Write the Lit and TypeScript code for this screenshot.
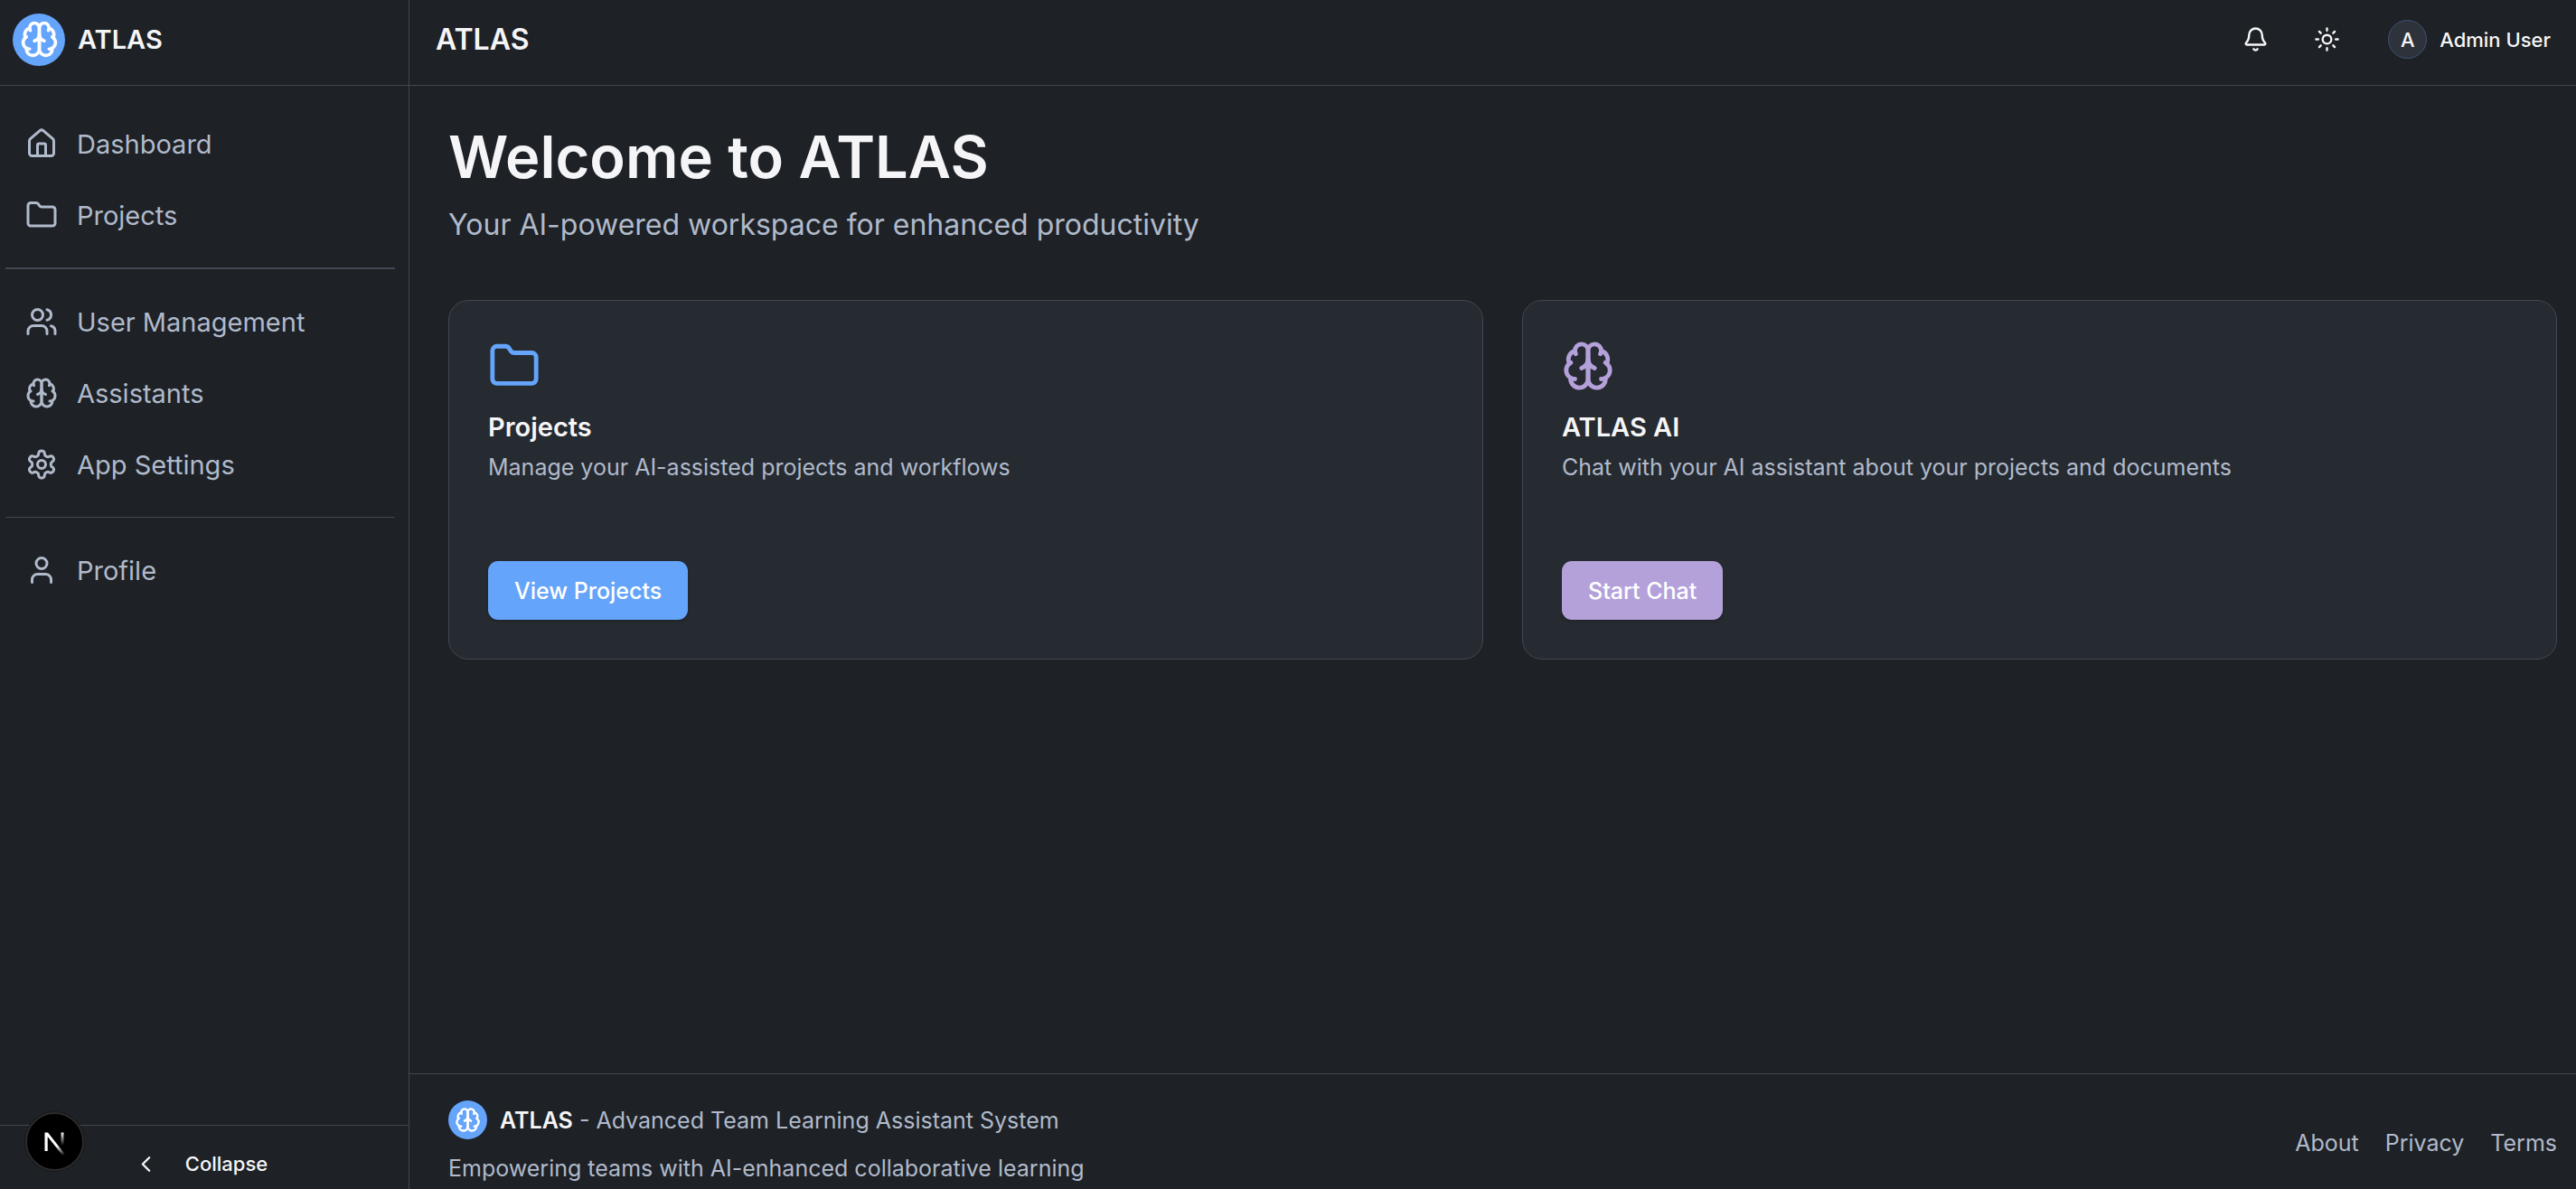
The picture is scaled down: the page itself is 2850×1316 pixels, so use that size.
import { LitElement, html, svg, css, type TemplateResult } from "lit";
import { customElement, property } from "lit/decorators.js";

const ICONS: Record<string, TemplateResult> = {
  brain: svg`
    <path d="M12 5a3 3 0 1 0-5.997.125 4 4 0 0 0-2.526 5.77 4 4 0 0 0 .556 6.588A4 4 0 1 0 12 18Z"/>
    <path d="M12 5a3 3 0 1 1 5.997.125 4 4 0 0 1 2.526 5.77 4 4 0 0 1-.556 6.588A4 4 0 1 1 12 18Z"/>
    <path d="M15 13a4.5 4.5 0 0 1-3-4 4.5 4.5 0 0 1-3 4"/>
    <path d="M17.599 6.5a3 3 0 0 0 .399-1.375"/>
    <path d="M6.003 5.125A3 3 0 0 0 6.401 6.5"/>
    <path d="M3.477 10.896a4 4 0 0 1 .585-.396"/>
    <path d="M19.938 10.5a4 4 0 0 1 .585.396"/>
    <path d="M6 18a4 4 0 0 1-1.967-.516"/>
    <path d="M19.967 17.484A4 4 0 0 1 18 18"/>`,
  home: svg`
    <path d="M15 21v-8a1 1 0 0 0-1-1h-4a1 1 0 0 0-1 1v8"/>
    <path d="M3 10a2 2 0 0 1 .709-1.528l7-5.999a2 2 0 0 1 2.582 0l7 5.999A2 2 0 0 1 21 10v9a2 2 0 0 1-2 2H5a2 2 0 0 1-2-2z"/>`,
  folder: svg`
    <path d="M20 20a2 2 0 0 0 2-2V8a2 2 0 0 0-2-2h-7.9a2 2 0 0 1-1.69-.9L9.6 3.9A2 2 0 0 0 7.93 3H4a2 2 0 0 0-2 2v13a2 2 0 0 0 2 2Z"/>`,
  users: svg`
    <path d="M16 21v-2a4 4 0 0 0-4-4H6a4 4 0 0 0-4 4v2"/>
    <circle cx="9" cy="7" r="4"/>
    <path d="M22 21v-2a4 4 0 0 0-3-3.87"/>
    <path d="M16 3.13a4 4 0 0 1 0 7.75"/>`,
  settings: svg`
    <path d="M12.22 2h-.44a2 2 0 0 0-2 2v.18a2 2 0 0 1-1 1.73l-.43.25a2 2 0 0 1-2 0l-.15-.08a2 2 0 0 0-2.73.73l-.22.38a2 2 0 0 0 .73 2.73l.15.1a2 2 0 0 1 1 1.72v.51a2 2 0 0 1-1 1.74l-.15.09a2 2 0 0 0-.73 2.73l.22.38a2 2 0 0 0 2.73.73l.15-.08a2 2 0 0 1 2 0l.43.25a2 2 0 0 1 1 1.73V20a2 2 0 0 0 2 2h.44a2 2 0 0 0 2-2v-.18a2 2 0 0 1 1-1.73l.43-.25a2 2 0 0 1 2 0l.15.08a2 2 0 0 0 2.73-.73l.22-.39a2 2 0 0 0-.73-2.73l-.15-.08a2 2 0 0 1-1-1.74v-.5a2 2 0 0 1 1-1.74l.15-.09a2 2 0 0 0 .73-2.73l-.22-.38a2 2 0 0 0-2.73-.73l-.15.08a2 2 0 0 1-2 0l-.43-.25a2 2 0 0 1-1-1.73V4a2 2 0 0 0-2-2z"/>
    <circle cx="12" cy="12" r="3"/>`,
  user: svg`
    <path d="M19 21v-2a4 4 0 0 0-4-4H9a4 4 0 0 0-4 4v2"/>
    <circle cx="12" cy="7" r="4"/>`,
  bell: svg`
    <path d="M10.268 21a2 2 0 0 0 3.464 0"/>
    <path d="M3.262 15.326A1 1 0 0 0 4 17h16a1 1 0 0 0 .74-1.673C19.41 13.956 18 12.499 18 8A6 6 0 0 0 6 8c0 4.499-1.411 5.956-2.738 7.326"/>`,
  sun: svg`
    <circle cx="12" cy="12" r="4"/>
    <path d="M12 2v2M12 20v2M4.93 4.93l1.41 1.41M17.66 17.66l1.41 1.41M2 12h2M20 12h2M6.34 17.66l-1.41 1.41M19.07 4.93l-1.41 1.41"/>`,
  chevron: svg`<path d="m15 18-6-6 6-6"/>`,
};

@customElement("app-icon")
export class AppIcon extends LitElement {
  @property() name = "";

  static styles = css`
    :host { display: block; flex: none; width: 36px; height: 36px; }
    .icon {
      display: block; width: 100%; height: 100%;
      fill: none; stroke: currentColor; stroke-width: 2;
      stroke-linecap: round; stroke-linejoin: round;
    }
  `;

  render() {
    return html`<svg class="icon" viewBox="0 0 24 24" aria-hidden="true">${ICONS[this.name]}</svg>`;
  }
}

interface NavItem { icon: string; label: string; }

const NAV_MAIN: NavItem[] = [
  { icon: "home", label: "Dashboard" },
  { icon: "folder", label: "Projects" },
];
const NAV_ADMIN: NavItem[] = [
  { icon: "users", label: "User Management" },
  { icon: "brain", label: "Assistants" },
  { icon: "settings", label: "App Settings" },
];
const NAV_ACCOUNT: NavItem[] = [{ icon: "user", label: "Profile" }];

const CARDS = [
  {
    tone: "blue", icon: "folder", title: "Projects",
    text: "Manage your AI-assisted projects and workflows", action: "View Projects",
  },
  {
    tone: "violet", icon: "brain", title: "ATLAS AI",
    text: "Chat with your AI assistant about your projects and documents", action: "Start Chat",
  },
];

@customElement("app-root")
export class AppRoot extends LitElement {
  static styles = css`
    :host {
      --bg: #1e2125;
      --card: #262a31;
      --line: #414753;
      --text: #f5f5f7;
      --muted: #b0bacb;
      --blue: #64a4fa;
      --violet: #b4a1da;
      display: block;
      font-family: Inter, "Liberation Sans", sans-serif;
      color: var(--text);
      background: var(--bg);
    }
    * { box-sizing: border-box; margin: 0; }
    a { color: inherit; text-decoration: none; }
    button {
      font: inherit; color: inherit; background: none; border: 0; padding: 0; cursor: pointer;
    }
    .shell { display: flex; height: 100vh; overflow: hidden; }

    .sidebar {
      position: relative; flex: none; width: 453px;
      display: flex; flex-direction: column;
      border-right: 1px solid var(--line);
    }
    .bar {
      flex: none; display: flex; align-items: center; height: 95px;
      padding: 0 28px 7px 29px; border-bottom: 1px solid var(--line);
    }
    .brand { gap: 14px; padding-left: 14px; font-size: 29px; font-weight: 600; }
    .mark {
      display: grid; place-items: center; flex: none;
      width: 58px; height: 58px; border-radius: 50%;
      background: var(--blue); color: #fff;
    }
    .mark app-icon { width: 43px; height: 43px; }
    .mark.small { width: 43px; height: 43px; }
    .mark.small app-icon { width: 29px; height: 29px; }

    .nav { flex: 1; padding: 28px 15px 0 6px; }
    .list { display: flex; flex-direction: column; gap: 7px; list-style: none; padding: 0; }
    .item {
      display: flex; align-items: center; gap: 21px; height: 72px; padding: 0 22px;
      font-size: 29px; color: var(--muted);
    }
    .rule { border: 0; height: 1px; margin: 22px 0; background: var(--line); }
    .rule.strong { height: 2px; }
    .fold { padding: 14px 15px 0 6px; border-top: 1px solid var(--line); }
    .collapse {
      display: flex; align-items: center; justify-content: center; gap: 29px;
      width: 100%; height: 56px; font-size: 22px; font-weight: 500;
    }
    .collapse app-icon, .tool app-icon { width: 29px; height: 29px; }
    .dev {
      position: absolute; left: 28px; bottom: 20px; width: 65px; height: 65px;
      border-radius: 50%; background: #000; border: 2px solid #2b2b2c;
      box-shadow: 0 0 0 1px #16181a;
    }
    .dev svg { display: block; width: 100%; height: 100%; }

    .page { flex: 1; min-width: 0; display: flex; flex-direction: column; }
    .app-name { flex: 1; font-size: 32px; font-weight: 600; }
    .tools { display: flex; align-items: center; gap: 14px; }
    .tool { display: grid; place-items: center; width: 65px; height: 65px; }
    .account {
      display: flex; align-items: center; gap: 14px; padding-left: 21px;
      font-size: 22px; font-weight: 500;
    }
    .avatar {
      display: grid; place-items: center; width: 43px; height: 43px;
      border-radius: 50%; background: #2e323a; border: 1px solid #3c5579;
    }
    .content { flex: 1; padding: 43px 21px 43px 43px; }
    .hero { font-size: 65px; line-height: 72px; font-weight: 600; }
    .lead { margin-top: 14px; font-size: 32px; line-height: 50px; color: var(--muted); }
    .cards { display: grid; grid-template-columns: 1fr 1fr; gap: 43px; margin-top: 58px; }
    .card {
      display: flex; flex-direction: column; align-items: flex-start;
      padding: 43px; border: 1px solid var(--line); border-radius: 22px; background: var(--card);
    }
    .card app-icon { width: 58px; height: 58px; }
    .blue app-icon { color: var(--blue); }
    .violet app-icon { color: var(--violet); }
    .card-title { margin-top: 21px; font-size: 29px; line-height: 36px; font-weight: 600; }
    .card-text { margin-top: 8px; font-size: 25px; line-height: 36px; color: var(--muted); }
    .action {
      height: 65px; margin-top: 86px; padding: 0 29px; border-radius: 11px;
      font-size: 25px; font-weight: 500; color: #fff;
      box-shadow: 0 2px 3px rgba(0, 0, 0, 0.15);
    }
    .blue .action { background: var(--blue); }
    .violet .action { background: var(--violet); }

    .footer {
      display: flex; align-items: center; justify-content: space-between;
      padding: 29px 21px 5px 43px; border-top: 1px solid var(--line);
      font-size: 25px; line-height: 36px; color: var(--muted);
    }
    .about { display: flex; flex-direction: column; gap: 14px; }
    .line { display: flex; align-items: center; gap: 14px; }
    .line strong { font-weight: 600; color: var(--text); }
    .links { display: flex; gap: 29px; }
  `;

  private list(items: NavItem[]) {
    return html`<ul class="list">
      ${items.map((i) => html`<li>
        <a class="item" href="#"><app-icon name=${i.icon}></app-icon><span>${i.label}</span></a>
      </li>`)}
    </ul>`;
  }

  render() {
    return html`
      <div class="shell">
        <aside class="sidebar">
          <div class="bar brand">
            <span class="mark"><app-icon name="brain"></app-icon></span>
            <span>ATLAS</span>
          </div>
          <nav class="nav">
            ${this.list(NAV_MAIN)}
            <hr class="rule strong" />
            ${this.list(NAV_ADMIN)}
            <hr class="rule" />
            ${this.list(NAV_ACCOUNT)}
          </nav>
          <div class="fold">
            <button class="collapse"><app-icon name="chevron"></app-icon><span>Collapse</span></button>
          </div>
          <button class="dev" aria-label="Developer tools">
            <svg viewBox="0 0 61 61" fill="none" aria-hidden="true">
              <defs>
                <linearGradient id="diag" gradientUnits="userSpaceOnUse" x1="33" y1="35" x2="41" y2="46">
                  <stop stop-color="#fff"/><stop offset="1" stop-color="#fff" stop-opacity="0"/>
                </linearGradient>
                <linearGradient id="stem" gradientUnits="userSpaceOnUse" x1="0" y1="20" x2="0" y2="35">
                  <stop stop-color="#fff"/><stop offset="1" stop-color="#fff" stop-opacity="0"/>
                </linearGradient>
              </defs>
              <path d="M19.5 20.5h3.5L41.5 44l-2.3 1.8L22.7 24.9V41h-3.2z" fill="url(#diag)"/>
              <path d="M37.5 20.5h3v14h-3z" fill="url(#stem)"/>
            </svg>
          </button>
        </aside>
        <div class="page">
          <header class="bar">
            <span class="app-name">ATLAS</span>
            <div class="tools">
              <button class="tool" aria-label="Notifications"><app-icon name="bell"></app-icon></button>
              <button class="tool" aria-label="Toggle theme"><app-icon name="sun"></app-icon></button>
              <button class="account"><span class="avatar">A</span><span>Admin User</span></button>
            </div>
          </header>
          <main class="content">
            <h1 class="hero">Welcome to ATLAS</h1>
            <p class="lead">Your AI-powered workspace for enhanced productivity</p>
            <div class="cards">
              ${CARDS.map((c) => html`<section class="card ${c.tone}">
                <app-icon name=${c.icon}></app-icon>
                <h2 class="card-title">${c.title}</h2>
                <p class="card-text">${c.text}</p>
                <button class="action">${c.action}</button>
              </section>`)}
            </div>
          </main>
          <footer class="footer">
            <div class="about">
              <div class="line">
                <span class="mark small"><app-icon name="brain"></app-icon></span>
                <span><strong>ATLAS</strong> - Advanced Team Learning Assistant System</span>
              </div>
              <p>Empowering teams with AI-enhanced collaborative learning</p>
            </div>
            <nav class="links"><a href="#">About</a><a href="#">Privacy</a><a href="#">Terms</a></nav>
          </footer>
        </div>
      </div>
    `;
  }
}
